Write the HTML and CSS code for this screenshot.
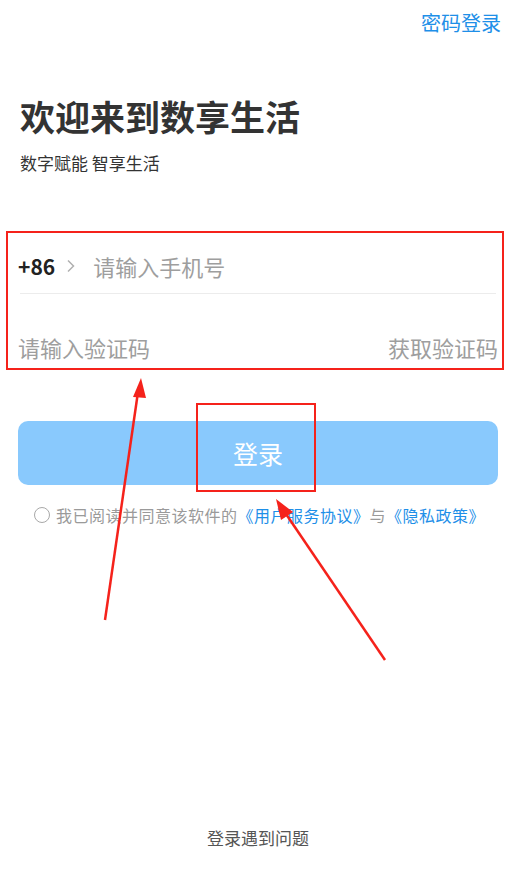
FILE: index.html
```html
<!DOCTYPE html>
<html lang="zh-CN">
<head>
<meta charset="utf-8">
<title>登录</title>
<link rel="stylesheet" href="styles.css">
</head>
<body>
<div class="page">
  <div class="topbar"><a class="pwd-login">密码登录</a></div>
  <h1 class="title">欢迎来到数享生活</h1>
  <p class="subtitle">数字赋能 智享生活</p>

  <div class="form">
    <div class="row phone-row">
      <span class="code">+86</span>
      <svg class="chev" width="10" height="14" viewBox="0 0 10 14"><path d="M2 1.5 L7.5 7 L2 12.5" fill="none" stroke="#b0b0b0" stroke-width="1.5"/></svg>
      <span class="ph">请输入手机号</span>
    </div>
    <div class="divider"></div>
    <div class="row code-row">
      <span class="ph">请输入验证码</span>
      <span class="ph">获取验证码</span>
    </div>
  </div>

  <div class="btn-wrap">
    <button class="login-btn">登录</button>
    <div class="mark-box"></div>
  </div>

  <div class="agree">
    <span class="radio"></span>
    <span class="agree-text">我已阅读并同意该软件的<a class="link">《用户服务协议》</a>与<a class="link">《隐私政策》</a></span>
  </div>

  <div class="help">登录遇到问题</div>

  <svg class="arrows" width="516" height="886" viewBox="0 0 516 886">
    <line x1="105" y1="620" x2="138" y2="392" stroke="#f5221b" stroke-width="2.5"/>
    <polygon points="141,378 133,397 146,398" fill="#f5221b"/>
    <line x1="385" y1="660" x2="286" y2="514" stroke="#f5221b" stroke-width="2.5"/>
    <polygon points="276,499 281,520 293,512" fill="#f5221b"/>
  </svg>
</div>
</body>
</html>
```

FILE: styles.css
```css
* { box-sizing: border-box; }
html, body { margin: 0; padding: 0; background: #fff; }
body {
  font-family: "Noto Sans CJK SC", "Noto Sans", sans-serif;
  color: #333;
}
.page {
  position: relative;
  width: 516px;
  min-height: 886px;
  display: flex;
  flex-direction: column;
}
.topbar {
  display: flex;
  justify-content: flex-end;
  padding: 10px 15px 0 0;
}
.pwd-login {
  font-size: 20px;
  line-height: 26px;
  color: #1e8fe8;
}
.title {
  margin: 58px 0 0 20px;
  font-size: 35px;
  line-height: 44px;
  font-weight: bold;
  color: #333;
}
.subtitle {
  margin: 13px 0 0 20px;
  font-size: 17px;
  line-height: 23px;
  color: #333;
}
.form {
  margin: 57px 12px 0 6px;
  border: 2px solid #f5221b;
  padding: 0 4px 0 10px;
}
.row {
  display: flex;
  align-items: center;
}
.phone-row {
  height: 60px;
  padding-top: 6px;
}
.code {
  font-size: 21px;
  font-weight: bold;
  color: #222;
}
.chev { margin: 0 0 0 11px; }
.phone-row .ph { margin-left: 17px; }
.ph {
  font-size: 22px;
  color: #9e9e9e;
}
.divider {
  height: 1px;
  background: #ececec;
  margin-left: 2px;
  margin-right: 2px;
}
.code-row {
  height: 74px;
  justify-content: space-between;
  align-items: flex-end;
  padding-bottom: 5px;
}
.btn-wrap {
  position: relative;
  margin: 51px 18px 0 18px;
}
.login-btn {
  display: block;
  width: 100%;
  height: 64px;
  border: none;
  border-radius: 10px;
  background: #89c9fd;
  color: #fff;
  font-family: "Noto Sans CJK SC", sans-serif;
  font-size: 25px;
}
.mark-box {
  position: absolute;
  left: 178px;
  top: -18px;
  width: 120px;
  height: 89px;
  border: 2px solid #f5221b;
}
.agree {
  display: flex;
  align-items: center;
  margin: 19px 0 0 34px;
}
.radio {
  width: 16px;
  height: 16px;
  border: 1.5px solid #a8a8a8;
  border-radius: 50%;
  margin-right: 6px;
}
.agree-text {
  font-size: 16px;
  line-height: 22px;
  color: #9a9a9a;
  letter-spacing: 0.5px;
}
.link { color: #1e8fe8; }
.help {
  margin-top: auto;
  padding-bottom: 36px;
  text-align: center;
  font-size: 17px;
  line-height: 24px;
  color: #555;
}
.arrows {
  position: absolute;
  left: 0;
  top: 0;
  pointer-events: none;
}
```
